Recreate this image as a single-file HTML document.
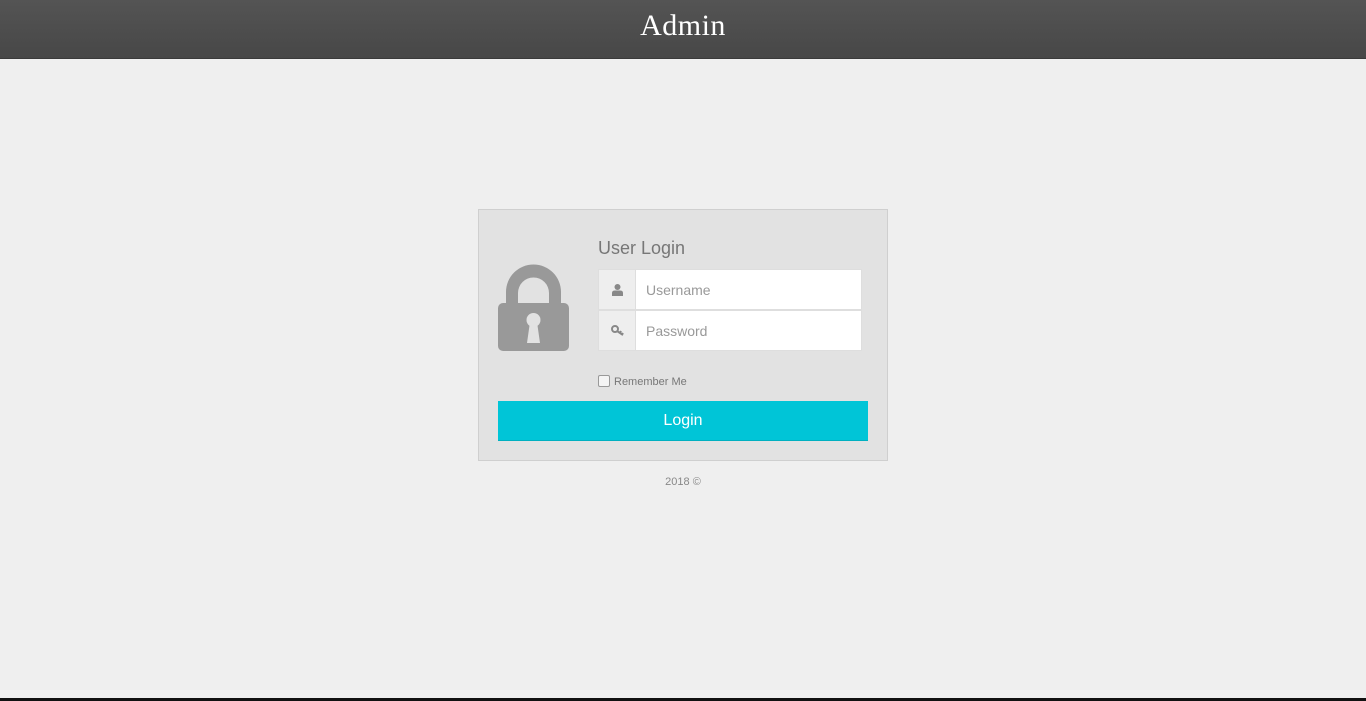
<!DOCTYPE html>
<html><head><meta charset="utf-8"><style>
*{margin:0;padding:0;box-sizing:border-box}
html,body{width:1366px;height:701px;overflow:hidden}
body{background:#efefef;font-family:"Liberation Sans",sans-serif;position:relative}
.hdr{position:absolute;left:0;top:0;width:1366px;height:59px;background:linear-gradient(#545454,#474747);border-bottom:1px solid #3a3a3a}
.hdr span{position:absolute;left:0;width:1366px;top:9px;text-align:center;color:#fff;font-family:"Liberation Serif",serif;font-size:30px;letter-spacing:0.5px}
.box{position:absolute;left:478px;top:209px;width:410px;height:252px;background:#e2e2e2;border:1px solid #cfcfcf}
.title{position:absolute;left:598px;top:238px;font-size:18px;color:#777}
.inp{position:absolute;left:598px;width:264px;height:41px;background:#fff;border:1px solid #dedede}
.inp .ic{position:absolute;left:0;top:0;width:37px;height:100%;background:#eee;border-right:1px solid #dedede}
.inp span{position:absolute;left:47px;top:12px;font-size:14px;color:#999}
.cb{position:absolute;left:598px;top:375px;width:12px;height:12px;border:1px solid #999;border-radius:2px;background:#f4f4f4}
.rm{position:absolute;left:614px;top:376px;font-size:11px;color:#777}
.btn{position:absolute;left:498px;top:401px;width:370px;height:40px;background:#00c5d7;border-bottom:1px solid #00b0c0;color:#fff;font-size:16px;text-align:center;line-height:39px}
.ft{position:absolute;left:0;width:1366px;top:476px;text-align:center;font-size:11px;color:#888}
.bot{position:absolute;left:0;top:698px;width:1366px;height:3px;background:#111}
</style></head><body>
<div class="hdr"><span>Admin</span></div>
<div class="box"></div>
<svg style="position:absolute;left:498px;top:264px" width="72" height="88" viewBox="0 0 72 88">
<path d="M8 40 V28 A27.5 27.5 0 0 1 63 28 V40 H51 V29 A15.5 15.5 0 0 0 20 29 V40 Z" fill="#999"/>
<rect x="0" y="39" width="71" height="48" rx="5" fill="#999"/>
<circle cx="35.5" cy="56" r="7" fill="#e2e2e2"/>
<path d="M32 58 L29 79 H42 L39 58 Z" fill="#e2e2e2"/>
</svg>
<div class="title">User Login</div>
<div class="inp" style="top:269px"><div class="ic"><svg style="position:absolute;left:13px;top:14px" width="11" height="12" viewBox="0 0 11 12"><circle cx="5.5" cy="3" r="3" fill="#888"/><path d="M0 12 V9 Q0 6.5 3 6.5 H8 Q11 6.5 11 9 V12 Z" fill="#888"/></svg></div><span>Username</span></div>
<div class="inp" style="top:310px"><div class="ic"><svg style="position:absolute;left:12px;top:14px" width="13" height="11" viewBox="0 0 13 11"><circle cx="4" cy="4" r="3" fill="none" stroke="#888" stroke-width="2"/><path d="M6 6 L12 10 M9 8 L10 6 M11 9.5 L12 8" stroke="#888" stroke-width="2"/></svg></div><span>Password</span></div>
<div class="cb"></div><div class="rm">Remember Me</div>
<div class="btn">Login</div>
<div class="ft">2018 ©</div>
<div class="bot"></div>
</body></html>
